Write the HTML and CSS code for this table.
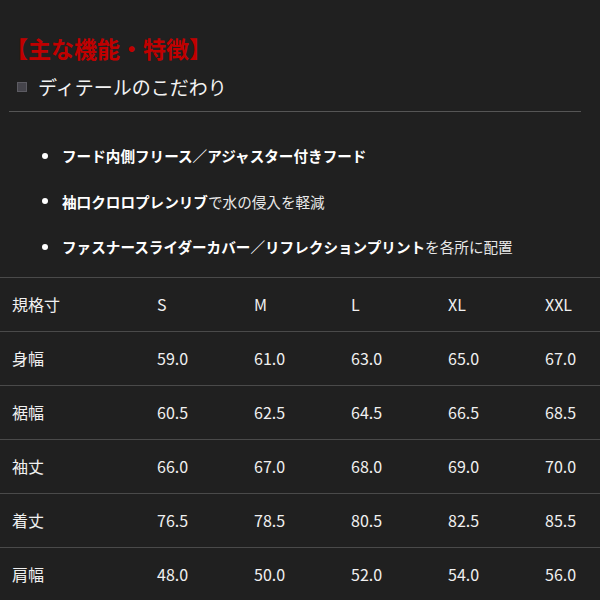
FILE: index.html
```html
<!DOCTYPE html>
<html lang="ja">
<head>
<meta charset="utf-8">
<link rel="stylesheet" href="styles.css">
</head>
<body>
<div class="page">
  <h1 class="title">【主な機能・特徴】</h1>
  <h2 class="subtitle"><span class="sq"></span>ディテールのこだわり</h2>
  <div class="rule"></div>
  <ul class="features">
    <li><b>フード内側フリース／アジャスター付きフード</b></li>
    <li><b>袖口クロロプレンリブ</b>で水の侵入を軽減</li>
    <li><b>ファスナースライダーカバー／リフレクションプリント</b>を各所に配置</li>
  </ul>
  <table class="sizes">
    <tr><td>規格寸</td><td>S</td><td>M</td><td>L</td><td>XL</td><td>XXL</td></tr>
    <tr><td>身幅</td><td>59.0</td><td>61.0</td><td>63.0</td><td>65.0</td><td>67.0</td></tr>
    <tr><td>裾幅</td><td>60.5</td><td>62.5</td><td>64.5</td><td>66.5</td><td>68.5</td></tr>
    <tr><td>袖丈</td><td>66.0</td><td>67.0</td><td>68.0</td><td>69.0</td><td>70.0</td></tr>
    <tr><td>着丈</td><td>76.5</td><td>78.5</td><td>80.5</td><td>82.5</td><td>85.5</td></tr>
    <tr><td>肩幅</td><td>48.0</td><td>50.0</td><td>52.0</td><td>54.0</td><td>56.0</td></tr>
  </table>
</div>
</body>
</html>
```
FILE: styles.css
```css
html, body {
  margin: 0;
  padding: 0;
  background: #202020;
}
body {
  font-family: "Noto Sans CJK JP", "Noto Sans", sans-serif;
  color: #f0f0f0;
  overflow: hidden;
}
.page {
  width: 600px;
  height: 600px;
  overflow: hidden;
}
.title {
  margin: 0;
  padding: 33px 0 0 5px;
  font-size: 23px;
  line-height: 30px;
  font-weight: 700;
  color: #c00000;
  white-space: nowrap;
}
.subtitle {
  margin: 10px 0 0 0;
  padding-left: 17px;
  display: flex;
  align-items: center;
  font-size: 19px;
  line-height: 28px;
  font-weight: 400;
  color: #f2f2f2;
}
.sq {
  width: 8px;
  height: 8px;
  background: #45444b;
  border: 1px solid #5c5b62;
  margin-right: 11px;
}
.rule {
  height: 1px;
  background: #555;
  margin: 10px 19px 0 9px;
}
.features {
  list-style: none;
  margin: 21px 0 0 0;
  padding: 0;
}
.features li {
  display: flex;
  align-items: center;
  height: 45.5px;
  padding-left: 42px;
  font-size: 14.6px;
  font-weight: 400;
  color: #e8e8e8;
  white-space: nowrap;
}
.features li::before {
  content: "";
  width: 6px;
  height: 6px;
  border-radius: 50%;
  background: #fff;
  margin-right: 14px;
  flex: none;
}
.features b {
  font-weight: 700;
  color: #fff;
}
.sizes {
  margin-top: 7px;
  width: 600px;
  border-collapse: collapse;
  table-layout: fixed;
}
.sizes tr {
  border-top: 1px solid #4a4a4a;
}
.sizes td {
  height: 53px;
  padding: 0 0 0 12px;
  font-size: 16px;
  color: #f0f0f0;
  vertical-align: middle;
}
.sizes td:first-child { width: 133px; }
.sizes td:nth-child(2),
.sizes td:nth-child(3),
.sizes td:nth-child(4),
.sizes td:nth-child(5) { width: 85px; }
```
